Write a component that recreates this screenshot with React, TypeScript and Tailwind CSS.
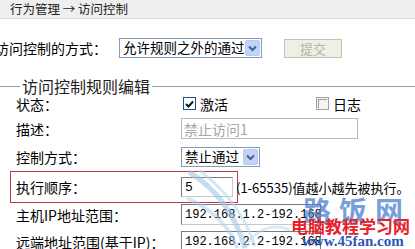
import React from "react";

const cjk = "font-['SimSun','Noto_Sans_CJK_SC',sans-serif]";

function XpSelect({ value, width }: { value: string; width: string }) {
  return (
    <div
      className={`flex h-[20px] items-center border border-[#7f9db9] bg-white ${width}`}
    >
      <span className="flex-1 overflow-hidden whitespace-nowrap pl-[3px] text-[13.5px] leading-none text-black">
        {value}
      </span>
      <span className="mr-px flex h-[16px] w-[15px] shrink-0 items-center justify-center rounded-[2px] border border-[#b6c9f1] bg-[#c1d3fb]">
        <svg width="9" height="7" viewBox="0 0 9 7">
          <path d="M1 1.5 L4.5 5 L8 1.5" stroke="#4d6185" strokeWidth="2" fill="none" />
        </svg>
      </span>
    </div>
  );
}

function Checkbox({ checked }: { checked: boolean }) {
  return (
    <span
      className={`flex h-[13px] w-[13px] items-center justify-center border ${
        checked ? "border-[#1c5180] bg-white" : "border-[#a0a0a0] bg-[#f4f4f0]"
      }`}
    >
      {checked ? (
        <svg width="9" height="8" viewBox="0 0 9 8">
          <path d="M1 4 L3.5 6.5 L8 1.5" stroke="#111" strokeWidth="2" fill="none" />
        </svg>
      ) : (
        <span className="h-[9px] w-[9px] border-l border-t border-[#9c9c9c]" />
      )}
    </span>
  );
}

function Label({ children }: { children: React.ReactNode }) {
  return <span className="w-[165px] shrink-0 text-[14px] leading-none text-black">{children}</span>;
}

export default function App() {
  return (
    <div className={`relative h-[249px] w-[415px] overflow-hidden bg-white ${cjk}`}>
      {/* Breadcrumb */}
      <div className="flex h-[19px] items-center border-b border-[#d9d9d9] bg-[#efefef] pl-[10px] text-[12.5px] text-[#222]">
        行为管理&nbsp;→&nbsp;访问控制
      </div>

      {/* Mode row */}
      <div className="mt-[19px] flex h-[20px] items-center">
        <span className="ml-[-5px] w-[124px] shrink-0 text-[14px] leading-none">访问控制的方式：</span>
        <XpSelect value="允许规则之外的通过" width="w-[143px]" />
        <button
          type="button"
          disabled
          className="ml-[22px] h-[19px] w-[58px] border border-[#c4c1b4] bg-[#f0efe6] text-[13px] leading-none text-[#b7b4a5]"
        >
          提交
        </button>
      </div>

      {/* Fieldset legend */}
      <div className="mt-[19px] flex h-[18px] items-center">
        <span className="h-px w-[20px] bg-[#9a9a9a]" />
        <span className="px-[2px] text-[16px] leading-none text-[#222]">访问控制规则编辑</span>
        <span className="h-px flex-1 bg-[#9a9a9a]" />
      </div>

      {/* 状态 */}
      <div className="flex h-[17px] items-center pl-[16px]">
        <Label>状态：</Label>
        <span className="ml-[2px]"><Checkbox checked /></span>
        <span className="ml-[4px] w-[116px] text-[14px] leading-none">激活</span>
        <Checkbox checked={false} />
        <span className="ml-[4px] text-[14px] leading-none">日志</span>
      </div>

      {/* 描述 */}
      <div className="mt-[6px] flex h-[21px] items-center pl-[16px]">
        <Label>描述：</Label>
        <div className="flex h-[21px] w-[177px] items-center border border-[#b9b9b9] pl-[2px] text-[14px] leading-none text-[#a6a6a6]">
          禁止访问1
        </div>
      </div>

      {/* 控制方式 */}
      <div className="mt-[8px] flex h-[20px] items-center pl-[16px]">
        <Label>控制方式：</Label>
        <XpSelect value="禁止通过" width="w-[79px]" />
      </div>

      {/* 执行顺序 */}
      <div className="mt-[4px] flex items-center">
        <div className="ml-[10px] flex h-[32px] w-[228px] shrink-0 items-center border border-[#c0393f] pl-[5px]">
          <Label>执行顺序：</Label>
          <div className="flex h-[20px] w-[52px] items-center border border-[#7a7a7a] border-b-[#c8c8c8] border-r-[#c8c8c8] pl-[3px] font-['Liberation_Mono',monospace] text-[13px] leading-none">
            5
          </div>
        </div>
        <span className="ml-[-2px] whitespace-nowrap text-[13px] leading-none">(1-65535)值越小越先被执行。</span>
      </div>

      {/* 主机IP */}
      <div className="mt-[1px] flex h-[21px] items-center pl-[16px]">
        <Label>主机IP地址范围：</Label>
        <div className="flex h-[21px] w-[140px] items-center overflow-hidden whitespace-nowrap border border-[#7a7a7a] border-b-[#c8c8c8] pl-[3px] font-['Liberation_Mono',monospace] text-[12px] leading-none">
          192.168.1.2-192.168.1.254
        </div>
      </div>

      {/* 远端 */}
      <div className="mt-[6px] flex h-[21px] items-center pl-[16px]">
        <Label>远端地址范围(基于IP)：</Label>
        <div className="flex h-[21px] w-[140px] items-center overflow-hidden whitespace-nowrap border border-[#7a7a7a] border-b-[#c8c8c8] pl-[3px] font-['Liberation_Mono',monospace] text-[12px] leading-none">
          192.168.2.2-192.168.2.254
        </div>
      </div>

      {/* Watermark */}
      <svg className="pointer-events-none absolute left-[185px] top-[168px]" width="110" height="81" viewBox="0 0 110 81">
        <path d="M4 4 C30 20 50 45 60 80" stroke="#9cc6ea" strokeWidth="5" fill="none" opacity="0.6" />
        <path d="M14 2 C40 22 58 44 70 78" stroke="#b8d8f2" strokeWidth="3" fill="none" opacity="0.6" />
        <path d="M2 30 C25 40 45 58 52 80" stroke="#a8cdee" strokeWidth="4" fill="none" opacity="0.5" />
        <path d="M60 80 C70 60 90 55 105 62" stroke="#b8d8f2" strokeWidth="3" fill="none" opacity="0.5" />
      </svg>
      <div className="pointer-events-none absolute left-[303px] top-[196px] flex gap-[8px] text-[28px] font-bold leading-none text-[#4a7fd0] opacity-75">
        <span>路</span>
        <span>饭</span>
        <span>网</span>
      </div>
      <div className="pointer-events-none absolute left-[291px] top-[217px] text-[17px] font-bold leading-none text-[#e8202a]">
        电脑教程学习网
      </div>
      <div className="pointer-events-none absolute left-[302px] top-[234px] font-['Liberation_Serif',serif] text-[15px] font-bold leading-none text-[#2a56b8]">
        www.45fan.com
      </div>
    </div>
  );
}
